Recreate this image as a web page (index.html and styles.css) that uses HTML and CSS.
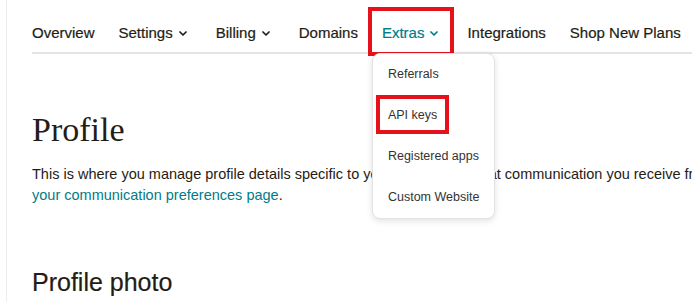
FILE: index.html
```html
<!DOCTYPE html>
<html lang="en">
<head>
  <meta charset="UTF-8" />
  <title>Profile</title>
  <link rel="stylesheet" href="styles.css">
</head>
<body>

  <div class="page">
    <!-- thin left rail -->
    <div class="rail"></div>

    <div class="main">
      <!-- Account tabs -->
      <nav class="tabs">
        <a class="tab">Overview</a>
        <a class="tab has-menu">Settings
          <svg class="chev" width="8" height="5" viewBox="0 0 8 5"><polyline points="1,1 4,4 7,1" /></svg>
        </a>
        <a class="tab has-menu">Billing
          <svg class="chev" width="8" height="5" viewBox="0 0 8 5"><polyline points="1,1 4,4 7,1" /></svg>
        </a>
        <a class="tab">Domains</a>
        <div class="tab has-menu is-open">Extras
          <svg class="chev" width="8" height="5" viewBox="0 0 8 5"><polyline points="1,1 4,4 7,1" /></svg>
          <span class="mark mark-tab"></span>

          <!-- Extras dropdown -->
          <ul class="dropdown">
            <li>Referrals</li>
            <li class="marked">API keys<span class="mark mark-item"></span></li>
            <li>Registered apps</li>
            <li>Custom Website</li>
          </ul>
        </div>
        <a class="tab">Integrations</a>
        <a class="tab">Shop New Plans</a>
      </nav>

      <h1 class="title">Profile</h1>
      <p class="intro">
        This is where you manage profile details specific to you. To manage what communication you receive from Mailchimp, visit<br>
        <a class="link">your communication preferences page</a>.
      </p>

      <h2 class="section-title">Profile photo</h2>
    </div>
  </div>

</body>
</html>
```

FILE: styles.css
```css
/* Base */
body {
  margin: 0;
  padding: 0;
  font-family: 'Liberation Sans', Arial, sans-serif;
  color: #241c15;
  background-color: #fff;
  overflow: hidden;
}

.page {
  display: flex;
  min-height: 100vh;
}

/* Left rail border */
.rail {
  width: 6px;
  flex-shrink: 0;
  border-right: 1px solid #ededed;
}

.main {
  flex: 1;
  padding-left: 25px;
  min-width: 900px;
}

/* Tabs */
.tabs {
  display: flex;
  gap: 24px;
  padding: 23px 0 9px;
  border-bottom: 2px solid #e4e4e4;
}

.tab {
  position: relative;
  display: flex;
  align-items: center;
  font-size: 15px;
  line-height: 20px;
  color: #241c15;
  white-space: nowrap;
  -webkit-text-stroke: 0.2px #241c15;
}

.tab.has-menu {
  padding-right: 5px;
}

.chev {
  margin-left: 6px;
  margin-top: 1px;
}

.chev polyline {
  fill: none;
  stroke: #241c15;
  stroke-width: 1.7;
  stroke-linecap: round;
  stroke-linejoin: round;
}

.tab.is-open {
  color: #007c89;
  -webkit-text-stroke: 0.2px #007c89;
}

.tab.is-open .chev polyline {
  stroke: #007c89;
}

/* Red annotation boxes */
.mark {
  position: absolute;
  border: 4px solid #e5121b;
  pointer-events: none;
}

.mark-tab {
  top: -16px;
  left: -14px;
  width: 78px;
  height: 41px;
}

.mark-item {
  top: 0;
  left: 3px;
  width: 65px;
  height: 31px;
}

/* Dropdown menu */
.dropdown {
  position: absolute;
  top: 30px;
  left: -10px;
  width: 121px;
  margin: 0;
  padding: 0;
  list-style: none;
  background-color: #fff;
  border: 1px solid #e3e3e3;
  border-radius: 8px;
  box-shadow: 0 2px 6px rgba(0, 0, 0, 0.12);
  z-index: 2;
}

.dropdown li {
  position: relative;
  height: 41px;
  line-height: 41px;
  padding-left: 15px;
  font-size: 12.5px;
  color: #333;
  -webkit-text-stroke: 0;
}

/* Page heading */
.title {
  margin: 56px 0 0;
  font-family: 'Liberation Serif', 'Times New Roman', serif;
  font-weight: 400;
  font-size: 34px;
  line-height: 40px;
}

.intro {
  margin: 14px 0 0;
  font-size: 14.5px;
  line-height: 21px;
  white-space: nowrap;
}

.link {
  color: #007c89;
}

.section-title {
  margin: 61px 0 0;
  font-weight: 400;
  font-size: 25px;
  line-height: 30px;
  -webkit-text-stroke: 0.2px #241c15;
}
```
